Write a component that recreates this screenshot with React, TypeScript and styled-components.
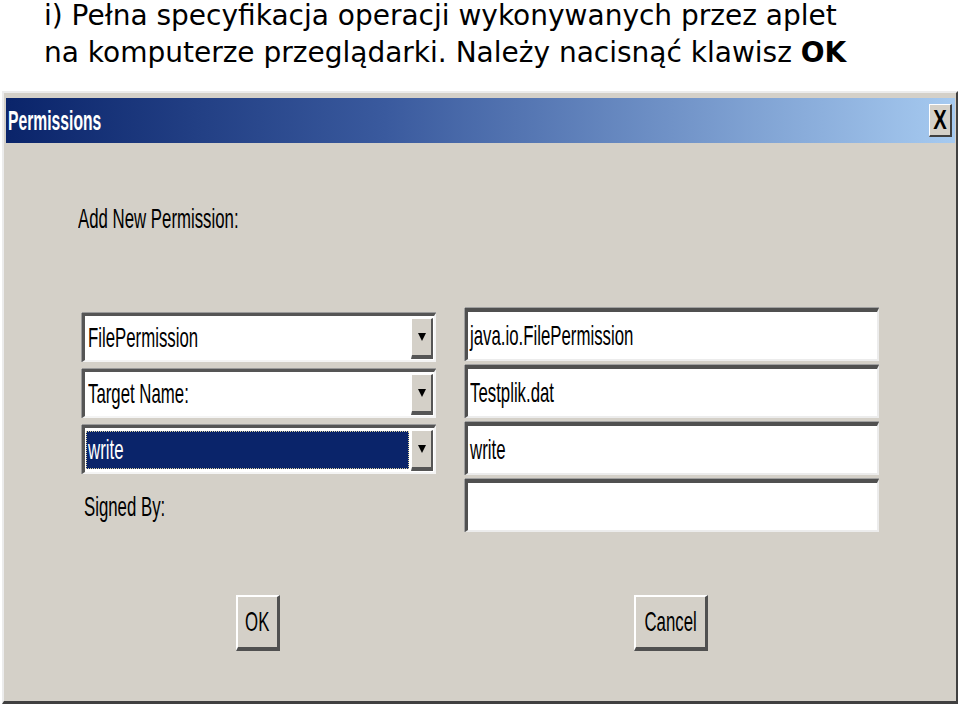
import React from "react";
import styled, { createGlobalStyle } from "styled-components";

const Global = createGlobalStyle`
  html, body { margin: 0; padding: 0; background: #ffffff; }
  body { width: 960px; height: 707px; overflow: hidden; }
`;

const Page = styled.div`
  width: 960px;
  height: 707px;
  overflow: hidden;
`;

const Heading = styled.div`
  padding-left: 44px;
  display: flex;
  flex-direction: column;
  gap: 6px;
  font-family: "DejaVu Sans", Verdana, sans-serif;
  font-size: 28px;
  line-height: 31px;
  color: #000;
  white-space: nowrap;
  b { font-weight: bold; }
`;

const Window = styled.div`
  box-sizing: border-box;
  margin: 23px 0 0 2px;
  width: 956px;
  height: 613px;
  display: flex;
  flex-direction: column;
  background: #d4d0c8;
  border-top: 2px solid #ececec;
  border-left: 2px solid #ececec;
  border-right: 2px solid #404040;
  border-bottom: 3px solid #404040;
  padding: 5px 1px 0 2px;
`;

const TitleBar = styled.div`
  height: 45px;
  flex: none;
  display: flex;
  align-items: center;
  justify-content: space-between;
  padding-left: 2px;
  background: linear-gradient(90deg, #0a246a 0%, #3a5a9e 40%, #a6caf0 100%);
`;

const Cond = styled.span<{ $w?: number; $center?: boolean }>`
  display: inline-block;
  white-space: nowrap;
  transform: scaleX(${(p) => p.$w ?? 0.6});
  transform-origin: ${(p) => (p.$center ? "center" : "left")} center;
`;

const TitleText = styled.div`
  font-family: "Liberation Sans", Arial, sans-serif;
  font-weight: bold;
  font-size: 28px;
  color: #ffffff;
  line-height: 32px;
`;

const CloseBtn = styled.div`
  box-sizing: border-box;
  width: 23px;
  height: 33px;
  margin-right: 3px;
  background: #d4d0c8;
  border-top: 1px solid #ffffff;
  border-left: 1px solid #ffffff;
  border-right: 2px solid #404040;
  border-bottom: 2px solid #404040;
  display: flex;
  align-items: center;
  justify-content: center;
  font-family: "Liberation Sans", Arial, sans-serif;
  font-weight: bold;
  font-size: 27px;
  color: #000;
`;

const Body = styled.div`
  flex: 1;
  padding: 61px 0 0 72px;
  font-family: "Liberation Sans", Arial, sans-serif;
  font-size: 28px;
  color: #000;
`;

const Caption = styled.div<{ $mt?: number; $ml?: number }>`
  line-height: 30px;
  height: 30px;
  margin-top: ${(p) => p.$mt ?? 0}px;
  margin-left: ${(p) => p.$ml ?? 0}px;
`;

const FormRow = styled.div`
  margin-top: 74px;
  display: flex;
  align-items: flex-start;
  gap: 29px;
`;

const LeftCol = styled.div`
  margin-left: 4px;
  width: 354px;
  padding-top: 5px;
  display: flex;
  flex-direction: column;
  gap: 7px;
`;

const RightCol = styled.div`
  width: 414px;
  display: flex;
  flex-direction: column;
  gap: 4px;
`;

const Combo = styled.div`
  box-sizing: border-box;
  height: 49px;
  display: flex;
  background: #ffffff;
  border-top: 3px solid #555555;
  border-left: 3px solid #555555;
  border-right: 2px solid #f4f4f4;
  border-bottom: 2px solid #f4f4f4;
  box-shadow: 0 -1px 0 #9a9a9a, -1px 0 0 #9a9a9a;
`;

const ComboValue = styled.div<{ $selected?: boolean }>`
  flex: 1;
  display: flex;
  align-items: center;
  margin: 3px 2px 3px 1px;
  padding-left: 2px;
  background: ${(p) => (p.$selected ? "#0a246a" : "#ffffff")};
  color: ${(p) => (p.$selected ? "#ffffff" : "#000000")};
  outline: ${(p) => (p.$selected ? "1px dotted #d8d0a0" : "none")};
  outline-offset: -1px;
`;

const DropBtn = styled.div`
  box-sizing: border-box;
  width: 22px;
  margin: 2px 1px 1px 0;
  background: #d4d0c8;
  border-top: 1px solid #ffffff;
  border-left: 1px solid #ffffff;
  border-right: 2px solid #555555;
  border-bottom: 4px solid #555555;
  display: flex;
  align-items: center;
  justify-content: center;
`;

const Arrow = styled.div`
  width: 0;
  height: 0;
  border-left: 4px solid transparent;
  border-right: 4px solid transparent;
  border-top: 8px solid #000000;
`;

const Field = styled.div`
  box-sizing: border-box;
  height: 53px;
  display: flex;
  align-items: center;
  padding-left: 2px;
  background: #ffffff;
  border-top: 4px solid #505050;
  border-left: 3px solid #505050;
  border-right: 2px solid #ececec;
  border-bottom: 2px solid #ececec;
  box-shadow: 0 -1px 0 #a0a0a0, -1px 0 0 #a0a0a0;
`;

const ButtonRow = styled.div`
  margin: 63px 0 0 158px;
  display: flex;
  gap: 354px;
`;

const Button = styled.div<{ $w: number }>`
  box-sizing: border-box;
  width: ${(p) => p.$w}px;
  height: 56px;
  display: flex;
  align-items: center;
  justify-content: center;
  background: #d4d0c8;
  border-top: 2px solid #ffffff;
  border-left: 2px solid #ffffff;
  border-right: 3px solid #505050;
  border-bottom: 4px solid #505050;
`;

export default function App() {
  return (
    <Page>
      <Global />
      <Heading>
        <div>i) Pełna specyfikacja operacji wykonywanych przez aplet</div>
        <div>
          na komputerze przeglądarki. Należy nacisnąć klawisz <b>OK</b>
        </div>
      </Heading>
      <Window>
        <TitleBar>
          <TitleText>
            <Cond $w={0.56}>Permissions</Cond>
          </TitleText>
          <CloseBtn>
            <Cond $w={0.75} $center>
              X
            </Cond>
          </CloseBtn>
        </TitleBar>
        <Body>
          <Caption>
            <Cond>Add New Permission:</Cond>
          </Caption>
          <FormRow>
            <LeftCol>
              <Combo>
                <ComboValue>
                  <Cond>FilePermission</Cond>
                </ComboValue>
                <DropBtn>
                  <Arrow />
                </DropBtn>
              </Combo>
              <Combo>
                <ComboValue>
                  <Cond>Target Name:</Cond>
                </ComboValue>
                <DropBtn>
                  <Arrow />
                </DropBtn>
              </Combo>
              <Combo>
                <ComboValue $selected>
                  <Cond>write</Cond>
                </ComboValue>
                <DropBtn>
                  <Arrow />
                </DropBtn>
              </Combo>
              <Caption $mt={11} $ml={2}>
                <Cond>Signed By:</Cond>
              </Caption>
            </LeftCol>
            <RightCol>
              <Field>
                <Cond>java.io.FilePermission</Cond>
              </Field>
              <Field>
                <Cond>Testplik.dat</Cond>
              </Field>
              <Field>
                <Cond>write</Cond>
              </Field>
              <Field />
            </RightCol>
          </FormRow>
          <ButtonRow>
            <Button $w={44}>
              <Cond $center>OK</Cond>
            </Button>
            <Button $w={74}>
              <Cond $center>Cancel</Cond>
            </Button>
          </ButtonRow>
        </Body>
      </Window>
    </Page>
  );
}
